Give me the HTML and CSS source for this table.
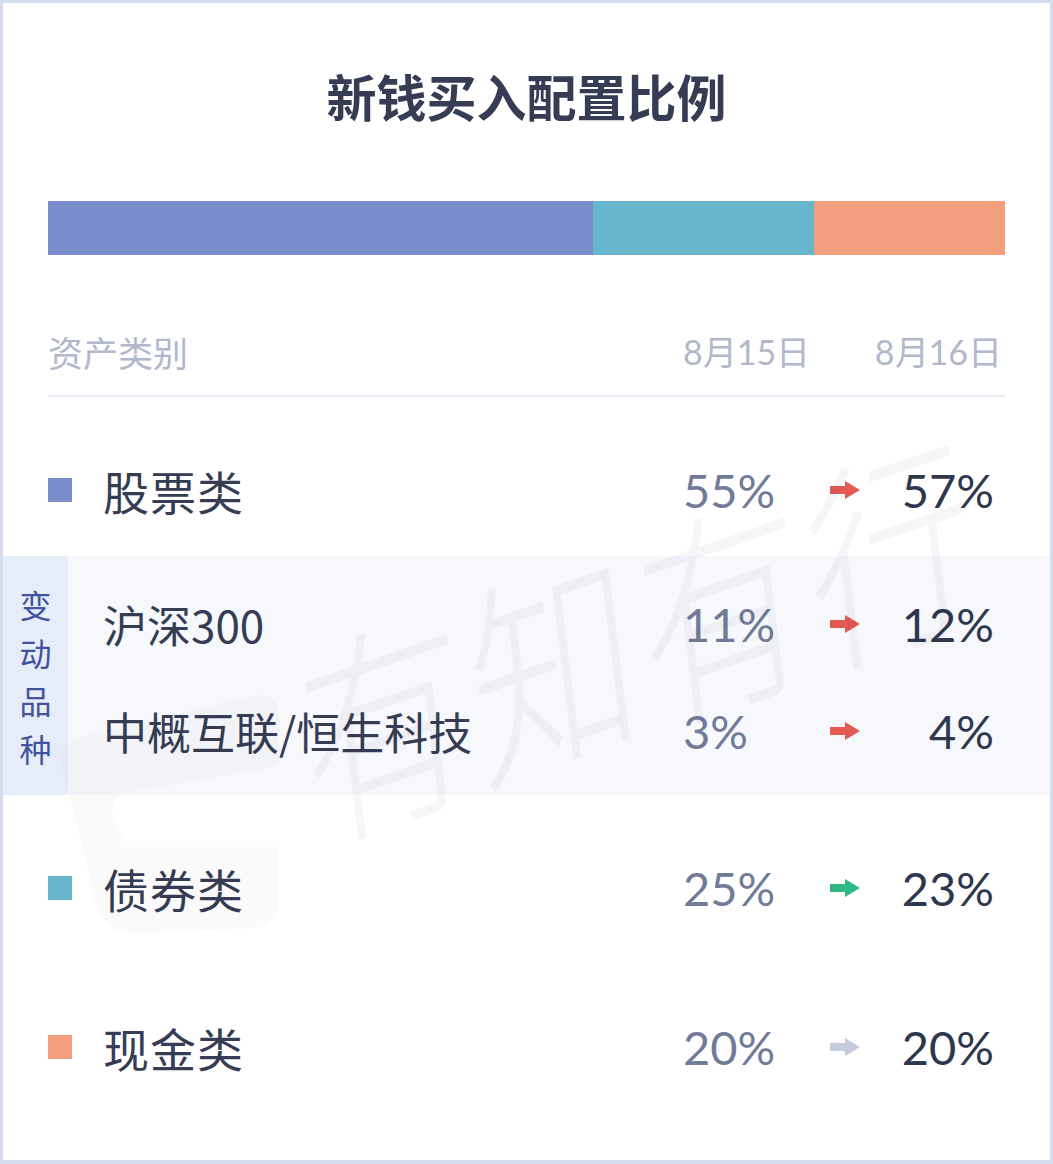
FILE: index.html
```html
<!DOCTYPE html>
<html lang="zh-CN">
<head>
<meta charset="utf-8">
<title>新钱买入配置比例</title>
<link rel="stylesheet" href="styles.css">
</head>
<body>
<div class="card">
  <h1 class="title">新钱买入配置比例</h1>

  <div class="bar">
    <div class="seg seg-stock" style="width:57%"></div>
    <div class="seg seg-bond" style="width:23%"></div>
    <div class="seg seg-cash" style="width:20%"></div>
  </div>

  <div class="grid head">
    <span class="name">资产类别</span>
    <span class="v1">8月15日</span>
    <span class="arrow-cell"></span>
    <span class="v2">8月16日</span>
  </div>

  <div class="grid row row-first">
    <span class="name"><i class="dot dot-stock"></i>股票类</span>
    <span class="v1">55%</span>
    <span class="arrow-cell"><svg class="arrow up" viewBox="0 0 30 18"><path d="M0 5h15V0l15 9-15 9v-5H0z"/></svg></span>
    <span class="v2">57%</span>
  </div>

  <div class="band">
    <div class="band-label">变<br>动<br>品<br>种</div>
    <div class="band-rows">
      <div class="grid row sub">
        <span class="name">沪深300</span>
        <span class="v1">11%</span>
        <span class="arrow-cell"><svg class="arrow up" viewBox="0 0 30 18"><path d="M0 5h15V0l15 9-15 9v-5H0z"/></svg></span>
        <span class="v2">12%</span>
      </div>
      <div class="grid row sub">
        <span class="name">中概互联/恒生科技</span>
        <span class="v1">3%</span>
        <span class="arrow-cell"><svg class="arrow up" viewBox="0 0 30 18"><path d="M0 5h15V0l15 9-15 9v-5H0z"/></svg></span>
        <span class="v2">4%</span>
      </div>
    </div>
  </div>

  <div class="grid row row-bond">
    <span class="name"><i class="dot dot-bond"></i>债券类</span>
    <span class="v1">25%</span>
    <span class="arrow-cell"><svg class="arrow down" viewBox="0 0 30 18"><path d="M0 5h15V0l15 9-15 9v-5H0z"/></svg></span>
    <span class="v2">23%</span>
  </div>

  <div class="grid row row-cash">
    <span class="name"><i class="dot dot-cash"></i>现金类</span>
    <span class="v1">20%</span>
    <span class="arrow-cell"><svg class="arrow flat" viewBox="0 0 30 18"><path d="M0 5h15V0l15 9-15 9v-5H0z"/></svg></span>
    <span class="v2">20%</span>
  </div>

  <div class="watermark" aria-hidden="true">
    <svg class="wm-logo" viewBox="0 0 240 250"><path fill-rule="evenodd" d="M12 80 Q2 55 32 45 L200 5 Q228 0 228 25 L228 75 L75 102 Q58 106 62 126 L75 150 L228 150 L228 210 Q228 235 203 237 L85 242 Q55 242 46 217 Z"/></svg>
    <div class="wm-text">有知有行</div>
  </div>
</div>
</body>
</html>
```
FILE: styles.css
```css
* { box-sizing: border-box; }
html, body { margin: 0; padding: 0; background: #ffffff; }
body {
  font-family: "Noto Sans CJK SC", "Noto Sans", sans-serif;
  color: #353c53;
}
.card {
  position: relative;
  width: 1053px;
  height: 1164px;
  border: 3px solid #d5dcee;
  border-bottom-width: 4px;
  background: #ffffff;
  overflow: hidden;
  padding-top: 57px;
}
.title {
  margin: 0;
  text-align: center;
  font-size: 50px;
  line-height: 70px;
  font-weight: 700;
  color: #353c53;
}
.bar {
  display: flex;
  height: 54px;
  margin: 71px 45px 0 45px;
}
.seg { height: 100%; }
.seg-stock { background: #7b8cca; }
.seg-bond { background: #67b5cb; }
.seg-cash { background: #f09e7c; }

.grid {
  display: grid;
  grid-template-columns: 1fr 147px 30px 145px;
  align-items: center;
}
.head {
  margin: 72px 45px 0 45px;
  height: 70px;
  padding-bottom: 20px;
  border-bottom: 2px solid #e9ecf5;
  font-size: 35px;
  line-height: 50px;
  color: #b1b8cc;
}
.head .v1, .head .v2 { font-size: 34px; }
.head .v2 { text-align: right; padding-right: 3px; }

.row {
  height: 80px;
  margin: 0 45px;
}
.row .name {
  display: flex;
  align-items: center;
  font-size: 46px;
  line-height: 80px;
  color: #353c53;
  letter-spacing: 1px;
}
.dot {
  display: inline-block;
  width: 24px;
  height: 24px;
  margin-right: 31px;
  flex: none;
}
.dot-stock { background: #7b8cca; }
.dot-bond { background: #67b5cb; }
.dot-cash { background: #f09e7c; }

.v1, .v2 {
  font-family: "Lato", "Noto Sans", sans-serif;
}
.row .v1 {
  font-size: 47px;
  color: #717b98;
}
.row .v2 {
  font-size: 47px;
  color: #2f374f;
  text-align: right;
  padding-right: 11px;
}
.arrow-cell { display: flex; align-items: center; }
.arrow { width: 30px; height: 18px; display: block; }
.arrow.up { fill: #e35a52; }
.arrow.down { fill: #2fb884; }
.arrow.flat { fill: #c5cadd; }

.row-first { margin-top: 53px; }

.band {
  display: flex;
  margin-top: 26px;
  height: 239px;
  background: #f6f8fc;
}
.band-label {
  width: 65px;
  flex: none;
  background: #e6ecf8;
  color: #41539f;
  font-size: 32px;
  line-height: 48px;
  text-align: center;
  display: flex;
  align-items: center;
  justify-content: center;
}
.band-rows {
  flex: 1;
  padding: 28px 0 0 0;
  display: flex;
  flex-direction: column;
  gap: 27px;
}
.band-rows .row {
  margin: 0 45px 0 35px;
}
.row.sub .name { font-size: 44px; letter-spacing: 0; }

.row-bond { margin-top: 53px; }
.row-cash { margin-top: 79px; }

.watermark {
  position: absolute;
  inset: 0;
  pointer-events: none;
}
.wm-logo {
  position: absolute;
  left: 48px;
  top: 688px;
  width: 240px;
  height: 250px;
  fill: rgba(30, 30, 50, 0.025);
}
.wm-text {
  position: absolute;
  left: 285px;
  top: 630px;
  font-size: 215px;
  line-height: 220px;
  font-weight: 300;
  color: rgba(30, 30, 50, 0.04);
  transform: rotate(-19deg) skewX(-12deg) scaleX(0.8);
  transform-origin: left top;
  white-space: nowrap;
  letter-spacing: 8px;
}
```
